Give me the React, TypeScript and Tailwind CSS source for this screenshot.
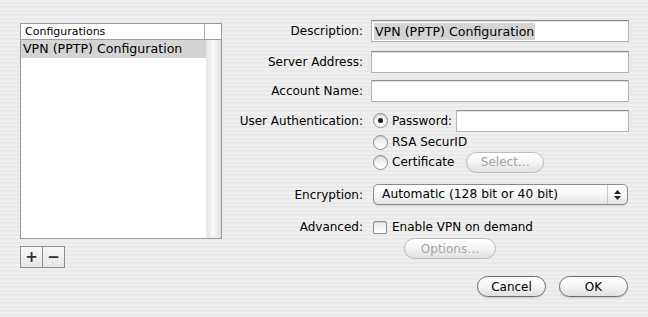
import React from 'react';

const font = 'font-["Lucida_Grande","DejaVu_Sans",sans-serif]';

const Label = ({ children }: { children: React.ReactNode }) => (
    <div className="w-[142px] shrink-0 text-right pr-[1px] text-[12px] text-black">{children}</div>
);

const TextField = ({ className = '', children }: { className?: string; children?: React.ReactNode }) => (
    <div className={`h-[22px] bg-white border border-[#b4b4b4] border-t-[#8c8c8c] shadow-[inset_0_1px_0_#e2e2e2] flex items-center px-[2px] ${className}`}>
        {children}
    </div>
);

const AquaButton = ({ label, disabled, className = '' }: { label: string; disabled?: boolean; className?: string }) => (
    <div
        className={`h-[21px] rounded-full flex items-center justify-center text-[12px] bg-gradient-to-b from-white via-[#f4f4f4] to-[#e0e0e0] ${
            disabled ? 'border border-[#bcbcbc] text-[#a4a4a4]' : 'border border-[#6e6e6e] text-black shadow-[0_1px_1px_rgba(0,0,0,0.15)]'
        } ${className}`}
    >
        {label}
    </div>
);

const Radio = ({ checked }: { checked?: boolean }) => (
    <div className="w-[15px] h-[15px] rounded-full border border-[#8e8e8e] bg-gradient-to-b from-[#e6e6e6] to-white shadow-[inset_0_1px_1px_rgba(0,0,0,0.12)] flex items-center justify-center shrink-0">
        {checked && <div className="w-[5px] h-[5px] rounded-full bg-[#1a1a1a]" />}
    </div>
);

export default function App() {
    return (
        <div
            className={`w-[648px] h-[317px] flex bg-[repeating-linear-gradient(to_bottom,#efefef_0px,#efefef_2px,#e9e9e9_2px,#e9e9e9_4px)] ${font}`}
        >
            {/* Left: configuration list */}
            <div className="pl-[20px] pt-[23px] flex flex-col">
                <div className="w-[202px] h-[216px] border border-[#9a9a9a] bg-white flex flex-col">
                    <div className="h-[16px] flex border-b border-[#9c9c9c] bg-white">
                        <div className="w-[184px] border-r border-[#b0b0b0] text-[11px] leading-[16px] pl-[4px] text-black">Configurations</div>
                        <div className="flex-1" />
                    </div>
                    <div className="flex-1 flex">
                        <div className="w-[185px] flex flex-col">
                            <div className="h-[18px] bg-[#d4d4d4] text-[12.6px] leading-[18px] pl-[2px] text-black">VPN (PPTP) Configuration</div>
                        </div>
                        <div className="flex-1 bg-gradient-to-r from-[#e4e4e4] via-[#fafafa] to-[#dcdcdc]" />
                    </div>
                </div>
                <div className="mt-[7px] flex w-[45px] h-[22px] border border-[#8e8e8e] bg-gradient-to-b from-[#f8f8f8] to-[#e6e6e6]">
                    <div className="w-[22px] border-r border-[#8e8e8e] flex items-center justify-center text-[15px] font-bold text-[#333] leading-none">+</div>
                    <div className="flex-1 flex items-center justify-center text-[15px] font-bold text-[#333] leading-none">−</div>
                </div>
            </div>

            {/* Right: form */}
            <div className="pt-[20px] flex flex-col">
                <div className="flex items-center gap-[7px]">
                    <Label>Description:</Label>
                    <TextField className="w-[258px]">
                        <span className="bg-[#d4d4d4] text-[12.6px] leading-[17px] px-[1px] text-black">VPN (PPTP) Configuration</span>
                    </TextField>
                </div>
                <div className="flex items-center gap-[7px] mt-[9px]">
                    <Label>Server Address:</Label>
                    <TextField className="w-[258px]" />
                </div>
                <div className="flex items-center gap-[7px] mt-[7px]">
                    <Label>Account Name:</Label>
                    <TextField className="w-[258px]" />
                </div>

                <div className="flex gap-[7px] mt-[8px]">
                    <div className="pt-[2px]">
                        <Label>User Authentication:</Label>
                    </div>
                    <div className="flex flex-col w-[258px]">
                        <div className="flex items-center h-[21px]">
                            <div className="ml-[2px]"><Radio checked /></div>
                            <span className="ml-[4px] text-[12px] text-black">Password:</span>
                            <TextField className="ml-[4px] flex-1 h-[20px]" />
                        </div>
                        <div className="flex items-center h-[20px] mt-[1px]">
                            <div className="ml-[2px]"><Radio /></div>
                            <span className="ml-[4px] text-[12px] text-black">RSA SecurID</span>
                        </div>
                        <div className="flex items-center h-[20px]">
                            <div className="ml-[2px]"><Radio /></div>
                            <span className="ml-[4px] text-[12px] text-black">Certificate</span>
                            <AquaButton label="Select…" disabled className="ml-[12px] w-[78px]" />
                        </div>
                    </div>
                </div>

                <div className="flex items-center gap-[7px] mt-[12px]">
                    <Label>Encryption:</Label>
                    <div className="w-[255px] ml-[2px] h-[21px] rounded-[5px] border border-[#8a8a8a] bg-gradient-to-b from-white via-[#f6f6f6] to-[#e4e4e4] flex items-center shadow-[0_1px_1px_rgba(0,0,0,0.12)]">
                        <span className="flex-1 pl-[8px] text-[12.3px] text-black">Automatic (128 bit or 40 bit)</span>
                        <div className="w-[20px] h-full border-l border-[#c6c6c6] flex flex-col items-center justify-center gap-[2px]">
                            <svg width="7" height="4" viewBox="0 0 7 4"><path d="M3.5 0L7 4H0z" fill="#222" /></svg>
                            <svg width="7" height="4" viewBox="0 0 7 4"><path d="M0 0H7L3.5 4z" fill="#222" /></svg>
                        </div>
                    </div>
                </div>

                <div className="flex items-center gap-[7px] mt-[13px]">
                    <Label>Advanced:</Label>
                    <div className="flex items-center ml-[2px]">
                        <div className="w-[14px] h-[13px] rounded-[2px] border border-[#8e8e8e] bg-gradient-to-b from-[#e8e8e8] to-white shadow-[inset_0_1px_1px_rgba(0,0,0,0.1)]" />
                        <span className="ml-[5px] text-[12px] text-black">Enable VPN on demand</span>
                    </div>
                </div>
                <div className="flex mt-[2px] pl-[182px]">
                    <AquaButton label="Options…" disabled className="w-[92px]" />
                </div>

                <div className="flex justify-end gap-[13px] mt-[17px] pr-[1px]">
                    <AquaButton label="Cancel" className="w-[69px]" />
                    <AquaButton label="OK" className="w-[69px]" />
                </div>
            </div>
        </div>
    );
}
